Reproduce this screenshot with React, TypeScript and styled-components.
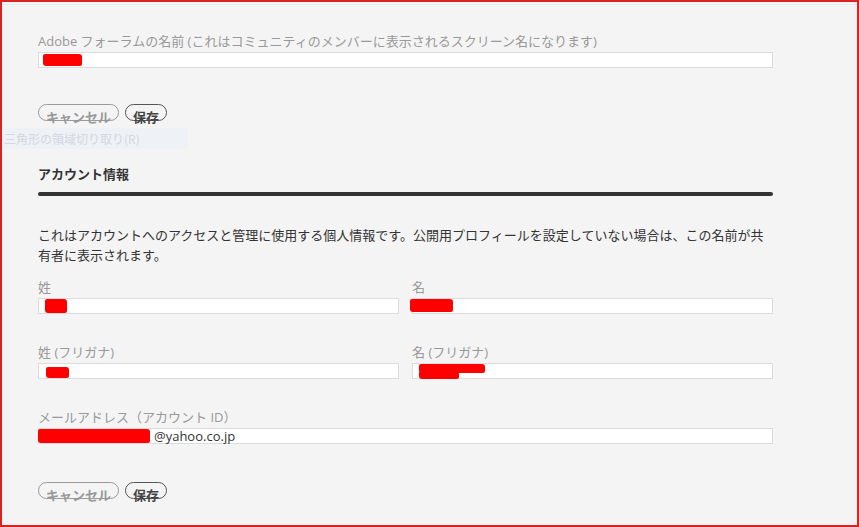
import React from "react";
import styled, { createGlobalStyle } from "styled-components";

const Global = createGlobalStyle`
  html, body { margin: 0; padding: 0; background: #f4f4f4; }
  body { font-family: "Open Sans", "Noto Sans CJK JP", sans-serif; }
`;

const Frame = styled.div`
  position: relative;
  box-sizing: border-box;
  width: 859px;
  height: 527px;
  border: 2px solid #d92323;
  background: #f4f4f4;
  overflow: hidden;
`;

const TopLine = styled.div`
  height: 1px;
  margin-top: 2px;
  background: #e4edf5;
`;

const Content = styled.div`
  width: 735px;
  padding: 27px 0 0 36px;
  display: flex;
  flex-direction: column;
`;

const Field = styled.div`
  display: flex;
  flex-direction: column;
`;

const Label = styled.div`
  font-size: 13px;
  line-height: 18px;
  color: #999;
  margin-bottom: 2px;
  white-space: nowrap;
`;

const Input = styled.div<{ $pad?: number }>`
  position: relative;
  box-sizing: border-box;
  height: 16px;
  background: #fff;
  border: 1px solid #dcdcdc;
  padding-left: ${(p) => p.$pad ?? 4}px;
  font-size: 13px;
  line-height: 14px;
  color: #333;
`;

const Redact = styled.span<{ $l: number; $t: number; $w: number; $h: number }>`
  position: absolute;
  left: ${(p) => p.$l}px;
  top: ${(p) => p.$t}px;
  width: ${(p) => p.$w}px;
  height: ${(p) => p.$h}px;
  background: #ff0000;
  border-radius: 2px 3px 2px 3px;
`;

const ButtonRow = styled.div<{ $mt: number }>`
  display: flex;
  gap: 6px;
  margin-top: ${(p) => p.$mt}px;
`;

const Pill = styled.button<{ $primary?: boolean }>`
  box-sizing: border-box;
  height: 17px;
  padding: 5px 7px 0;
  margin: 0;
  border-radius: 9px;
  border: 1px solid ${(p) => (p.$primary ? "#555" : "#9a9a9a")};
  background: transparent;
  font-family: "Noto Sans CJK JP", sans-serif;
  font-weight: 700;
  font-size: 13px;
  line-height: 13px;
  color: ${(p) => (p.$primary ? "#444" : "#999")};
  overflow: visible;
  white-space: nowrap;
`;

const Heading = styled.div`
  margin-top: 44px;
  font-family: "Noto Sans CJK JP", sans-serif;
  font-weight: 700;
  font-size: 13px;
  line-height: 18px;
  color: #333;
`;

const Bar = styled.div`
  margin-top: 9px;
  height: 4px;
  border-radius: 2px;
  background: #333;
`;

const Paragraph = styled.p`
  margin: 29px 0 0;
  font-family: "Noto Sans CJK JP", sans-serif;
  font-size: 13px;
  line-height: 20px;
  color: #333;
`;

const Grid = styled.div`
  margin-top: 13px;
  display: grid;
  grid-template-columns: 1fr 1fr;
  column-gap: 13px;
  row-gap: 29px;
`;

const Wide = styled.div`
  grid-column: 1 / 3;
`;

const Tip = styled.div`
  position: absolute;
  left: 0;
  top: 126px;
  width: 186px;
  height: 21px;
  background: #eef2f7;
  font-family: "Noto Sans CJK JP", sans-serif;
  font-size: 12px;
  line-height: 21px;
  padding-left: 2px;
  color: #d3d7dd;
  box-sizing: border-box;
`;

export default function App() {
  return (
    <>
      <Global />
      <Frame>
        <TopLine />
        <Content>
          <Field>
            <Label>Adobe フォーラムの名前 (これはコミュニティのメンバーに表示されるスクリーン名になります)</Label>
            <Input>
              <Redact $l={4} $t={1} $w={39} $h={12} />
            </Input>
          </Field>
          <ButtonRow $mt={36}>
            <Pill>キャンセル</Pill>
            <Pill $primary>保存</Pill>
          </ButtonRow>

          <Heading>アカウント情報</Heading>
          <Bar />
          <Paragraph>
            これはアカウントへのアクセスと管理に使用する個人情報です。公開用プロフィールを設定していない場合は、この名前が共有者に表示されます。
          </Paragraph>

          <Grid>
            <Field>
              <Label>姓</Label>
              <Input>
                <Redact $l={6} $t={0} $w={22} $h={14} />
              </Input>
            </Field>
            <Field>
              <Label>名</Label>
              <Input>
                <Redact $l={-3} $t={0} $w={43} $h={13} />
              </Input>
            </Field>
            <Field>
              <Label>姓 (フリガナ)</Label>
              <Input>
                <Redact $l={7} $t={3} $w={23} $h={11} />
              </Input>
            </Field>
            <Field>
              <Label>名 (フリガナ)</Label>
              <Input>
                <Redact $l={6} $t={0} $w={66} $h={9} />
                <Redact $l={6} $t={7} $w={40} $h={8} />
              </Input>
            </Field>
            <Wide>
              <Field>
                <Label>メールアドレス（アカウント ID）</Label>
                <Input $pad={115}>
                  <Redact $l={-1} $t={0} $w={112} $h={14} />
                  @yahoo.co.jp
                </Input>
              </Field>
            </Wide>
          </Grid>

          <ButtonRow $mt={38}>
            <Pill>キャンセル</Pill>
            <Pill $primary>保存</Pill>
          </ButtonRow>
        </Content>
        <Tip>三角形の領域切り取り(R)</Tip>
      </Frame>
    </>
  );
}
